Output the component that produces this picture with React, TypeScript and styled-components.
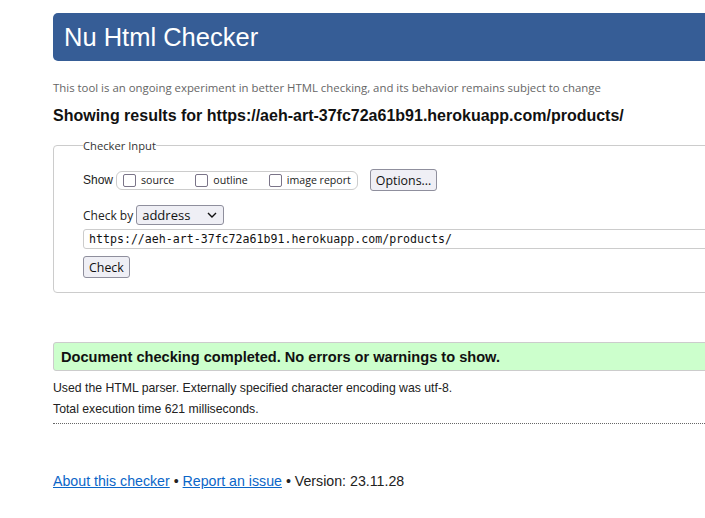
import React from "react";
import styled, { createGlobalStyle } from "styled-components";

const GlobalStyle = createGlobalStyle`
    html, body {
        margin: 0;
        padding: 0;
        background: #fff;
        overflow: hidden;
    }
    body {
        font-family: "Liberation Sans", Arial, sans-serif;
        color: #222;
    }
`;

const Page = styled.div`
    width: 760px;
    padding: 13px 0 0 53px;
`;

const Header = styled.h1`
    margin: 0;
    height: 48px;
    display: flex;
    align-items: center;
    padding-left: 11px;
    background: #365d96;
    border-radius: 5px;
    color: #fff;
    font-weight: normal;
    font-size: 25.5px;
`;

const Tagline = styled.p`
    margin: 19px 0 0;
    font-family: "Open Sans", sans-serif;
    font-size: 11.4px;
    color: #666;
`;

const Results = styled.h2`
    margin: 12px 0 0;
    font-size: 16px;
    font-weight: bold;
    color: #111;
`;

const Fieldset = styled.fieldset`
    margin: 13px 0 0;
    padding: 7px 29px 14px;
    border: 1px solid #ccc;
    border-radius: 4px;
`;

const Legend = styled.legend`
    padding: 0;
    font-family: "Open Sans", sans-serif;
    font-size: 11.2px;
    color: #333;
`;

const Row = styled.div<{ $mt?: number }>`
    display: flex;
    align-items: center;
    margin-top: ${({ $mt }) => $mt ?? 0}px;
`;

const Label = styled.span<{ $sans?: boolean }>`
    font-family: ${({ $sans }) => ($sans ? '"Open Sans", sans-serif' : '"Liberation Sans", Arial, sans-serif')};
    font-size: 12px;
    color: #222;
    margin-right: 3px;
`;

const Pill = styled.div`
    display: flex;
    align-items: center;
    gap: 21px;
    height: 17px;
    padding: 0 6px;
    border: 1px solid #ccc;
    border-radius: 6px;
`;

const Choice = styled.label`
    display: flex;
    align-items: center;
    gap: 5px;
    font-family: "Open Sans", sans-serif;
    font-size: 10.6px;
    color: #222;
`;

const Box = styled.span`
    box-sizing: border-box;
    width: 13px;
    height: 13px;
    border: 1px solid #7a7488;
    border-radius: 2px;
    background: #fff;
`;

const Button = styled.button<{ $ml?: number }>`
    height: 22px;
    margin-left: ${({ $ml }) => $ml ?? 0}px;
    padding: 0 5px;
    font-family: "Open Sans", sans-serif;
    font-size: 12.4px;
    color: #111;
    background: #efeff5;
    border: 1px solid #8f8f9d;
    border-radius: 3px;
`;

const Select = styled.div`
    width: 88px;
    height: 20px;
    box-sizing: border-box;
    display: flex;
    align-items: center;
    justify-content: space-between;
    padding: 0 6px 0 5px;
    font-family: "Open Sans", sans-serif;
    font-size: 13px;
    color: #111;
    background: #efeff5;
    border: 1px solid #8f8f9d;
    border-radius: 3px;
`;

const UrlInput = styled.div`
    margin-top: 4px;
    margin-right: -40px;
    height: 20px;
    box-sizing: border-box;
    display: flex;
    align-items: center;
    padding-left: 5px;
    font-family: "DejaVu Sans Mono", monospace;
    font-size: 11.6px;
    color: #111;
    border: 1px solid #ccc;
    border-radius: 3px;
`;

const Success = styled.div`
    margin-top: 49px;
    height: 29px;
    box-sizing: border-box;
    display: flex;
    align-items: center;
    padding-left: 7px;
    background: #ccffcc;
    border: 1px solid #ccc;
    border-radius: 3px;
    font-size: 14.6px;
    font-weight: bold;
    color: #111;
`;

const Note = styled.p`
    margin: 0;
    font-size: 12.25px;
    line-height: 21px;
    color: #222;
`;

const Details = styled.div`
    padding-top: 7px;
    padding-bottom: 3px;
    border-bottom: 1px dotted #666;
`;

const Footer = styled.p`
    margin: 49px 0 0;
    font-size: 14.2px;
    color: #222;
`;

const Link = styled.a`
    color: #0b66c8;
    text-decoration: underline;
`;

const Chevron = () => (
    <svg width="10" height="6" viewBox="0 0 10 6">
        <path d="M1 1l4 4 4-4" fill="none" stroke="#111" strokeWidth="1.4" />
    </svg>
);

export default function App() {
    return (
        <>
            <GlobalStyle />
            <Page>
                <Header>Nu Html Checker</Header>
                <Tagline>
                    This tool is an ongoing experiment in better HTML checking, and its behavior remains subject to change
                </Tagline>
                <Results>Showing results for https://aeh-art-37fc72a61b91.herokuapp.com/products/</Results>
                <Fieldset>
                    <Legend>Checker Input</Legend>
                    <Row $mt={9}>
                        <Label>Show</Label>
                        <Pill>
                            <Choice><Box />source</Choice>
                            <Choice><Box />outline</Choice>
                            <Choice><Box />image report</Choice>
                        </Pill>
                        <Button $ml={12}>Options...</Button>
                    </Row>
                    <Row $mt={14}>
                        <Label $sans>Check by</Label>
                        <Select>
                            address
                            <Chevron />
                        </Select>
                    </Row>
                    <UrlInput>https://aeh-art-37fc72a61b91.herokuapp.com/products/</UrlInput>
                    <Row $mt={7}>
                        <Button>Check</Button>
                    </Row>
                </Fieldset>
                <Success>Document checking completed. No errors or warnings to show.</Success>
                <Details>
                    <Note>Used the HTML parser. Externally specified character encoding was utf-8.</Note>
                    <Note>Total execution time 621 milliseconds.</Note>
                </Details>
                <Footer>
                    <Link href="#">About this checker</Link> • <Link href="#">Report an issue</Link> • Version: 23.11.28
                </Footer>
            </Page>
        </>
    );
}
